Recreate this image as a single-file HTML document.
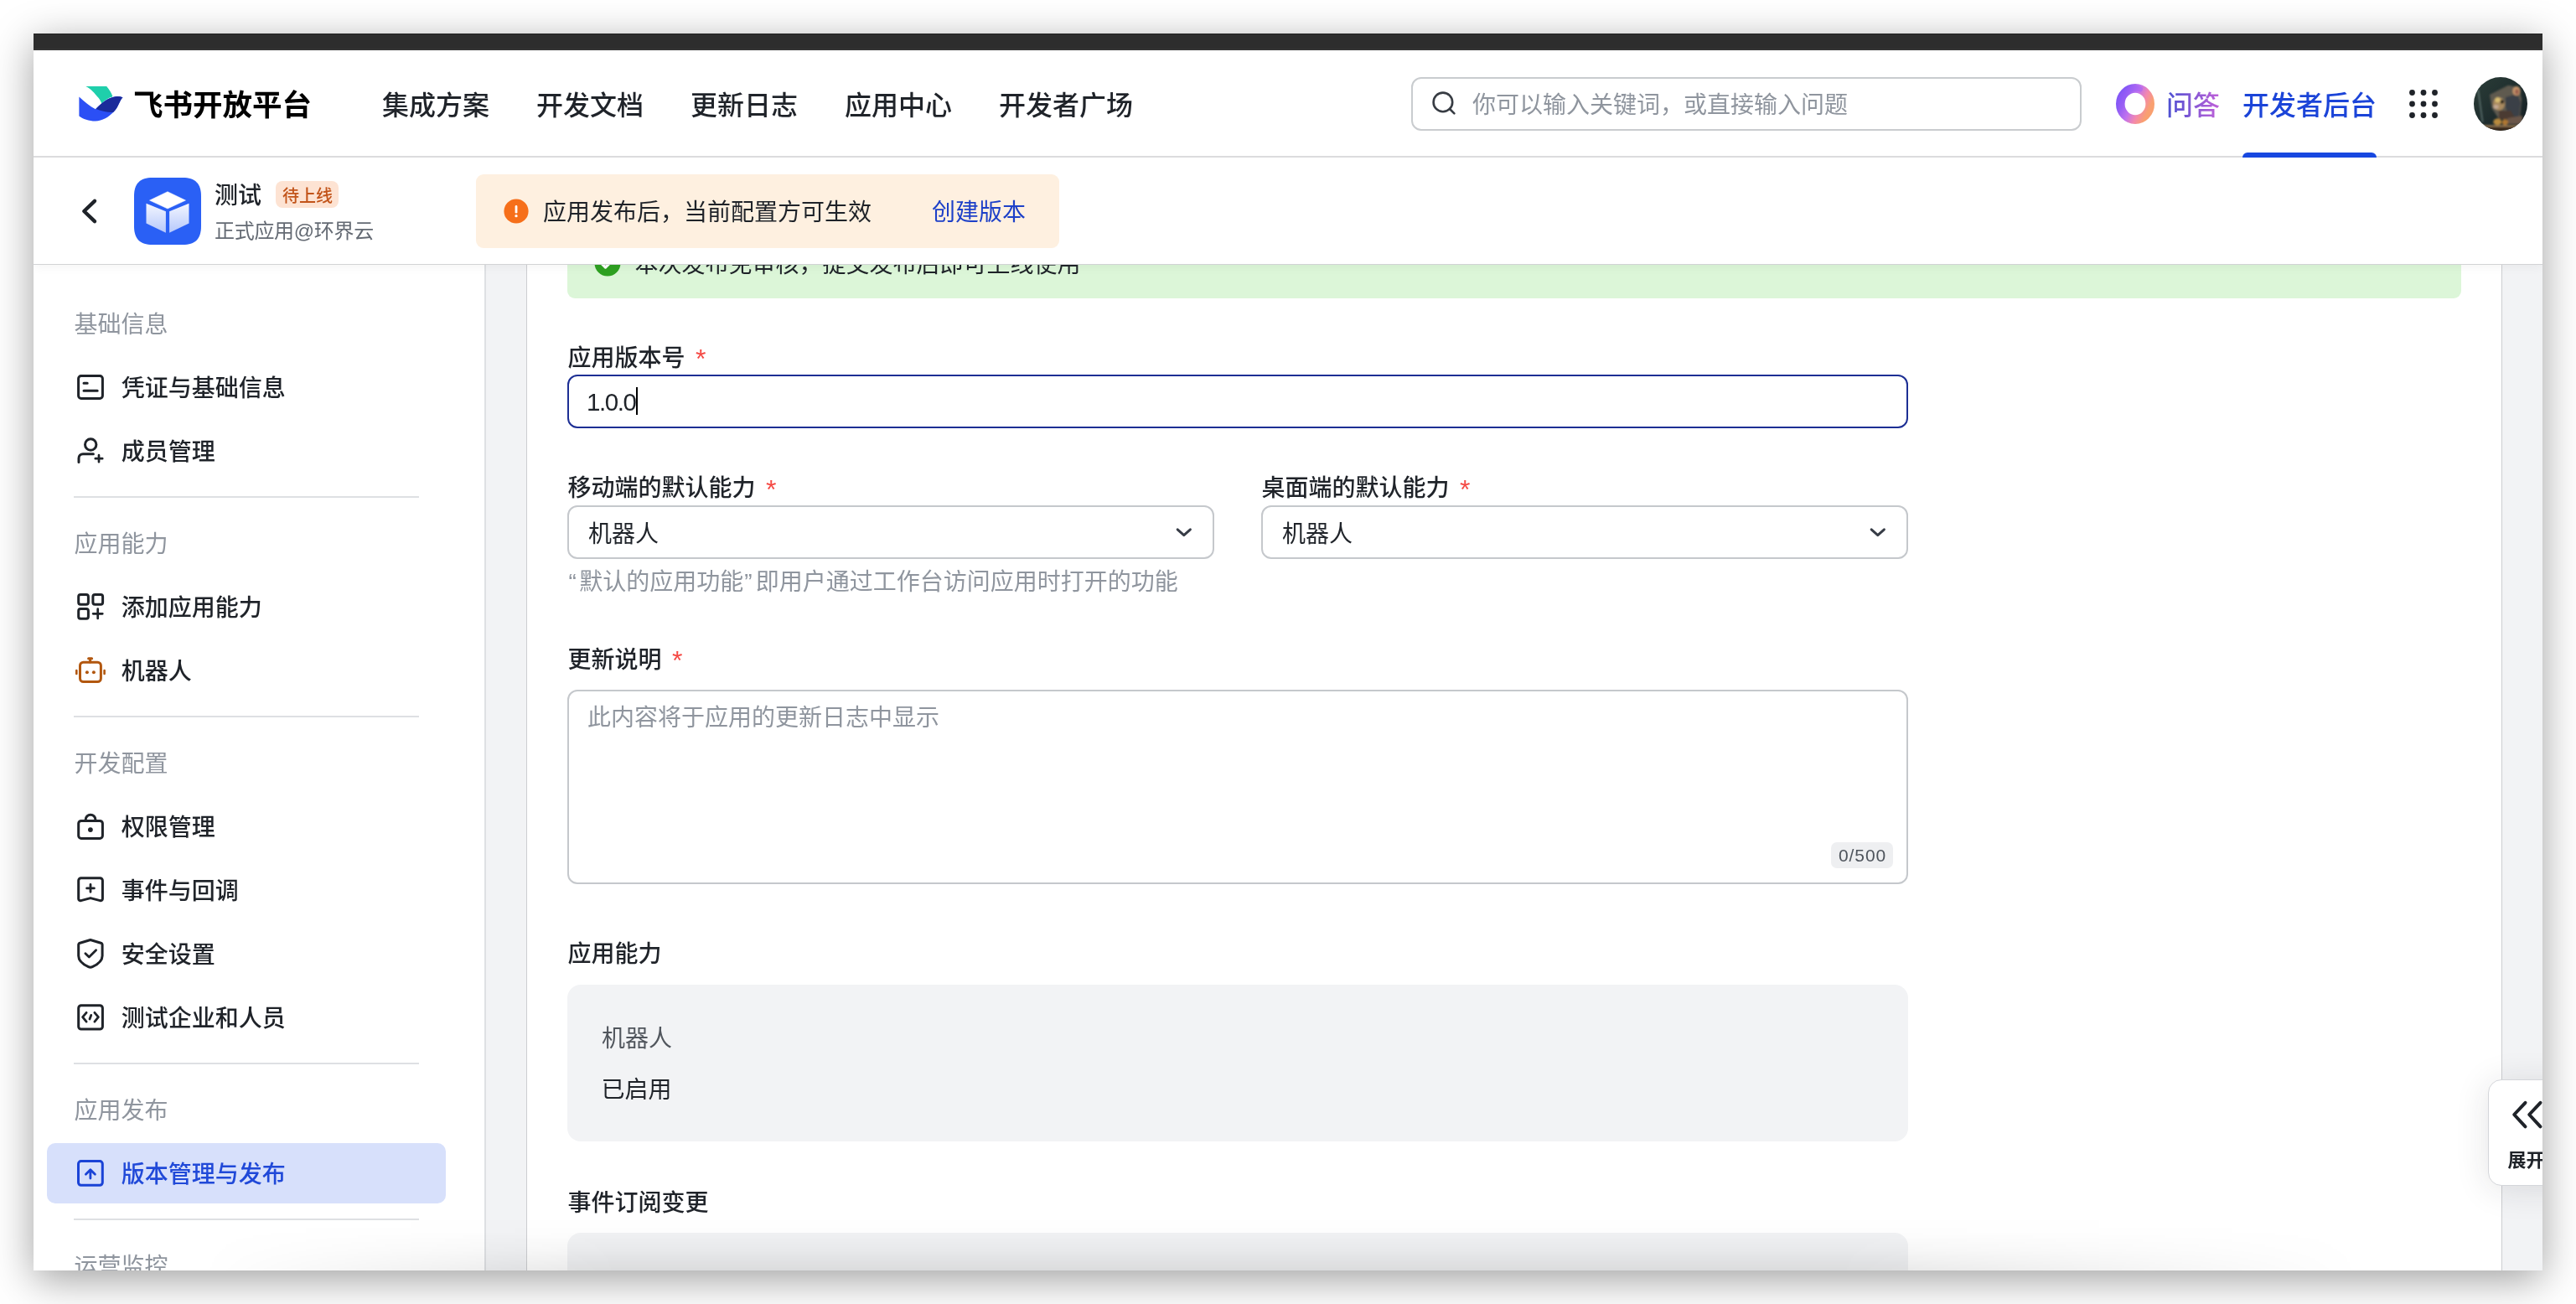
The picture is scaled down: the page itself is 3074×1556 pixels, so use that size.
<!DOCTYPE html>
<html lang="zh-CN">
<head>
<meta charset="utf-8">
<title>飞书开放平台</title>
<style>
*{box-sizing:border-box;margin:0;padding:0}
html,body{width:3074px;height:1556px;overflow:hidden;background:#fff}
body{font-family:"Liberation Sans","Noto Sans CJK SC",sans-serif;color:#1f2329;position:relative}
#shadow{position:absolute;left:40px;top:40px;width:2994px;height:1476px;box-shadow:0 11px 46px rgba(0,0,0,.376);background:#fff}
#win{position:absolute;left:40px;top:40px;width:2994px;height:1476px;overflow:hidden;background:#fff}
#abs{position:absolute;left:-40px;top:-40px;width:3074px;height:1556px;will-change:transform}
.a{position:absolute;white-space:nowrap}
.t{position:absolute;white-space:nowrap;height:40px;line-height:40px}
.m{font-weight:500}
.b{font-weight:700}
/* top */
#bar{left:40px;top:40px;width:2994px;height:20px;background:linear-gradient(to bottom,#222 0,#222 1px,#2d2d2d 1px,#2d2d2d 18px,#343434 18px)}
#hdr{left:40px;top:60px;width:2994px;height:128px;background:#fff;border-bottom:2px solid #dcdcde}
#sub{left:40px;top:188px;width:2994px;height:128px;background:#fff;border-bottom:1px solid #d2d3d5;box-shadow:0 2px 12px rgba(0,0,0,.05)}
.nav{font-size:32px;font-weight:500;top:105.500px;color:#1f2329}
#search{left:1684px;top:92px;width:800px;height:64px;border:2px solid #c9cccf;border-radius:12px;background:#fff}
/* body */
#bg{left:40px;top:316px;width:2994px;height:1200px;background:#f2f3f5}
#side{left:40px;top:316px;width:540px;height:1200px;background:#fff;border-right:2px solid #dee0e3}
#panel{left:628px;top:316px;width:2358px;height:1200px;background:#fff;border-left:1px solid #cdced1;border-right:1px solid #cdced1}
.sh{font-size:28px;color:#8f959e;left:88.500px}
.si{font-size:28px;font-weight:500;color:#1f2329;left:144.800px}
.sd{left:88px;width:412px;height:2px;background:#dee0e3}
.ico{position:absolute;left:90px;width:36px;height:36px;overflow:visible}
.lbl{font-size:28px;font-weight:500;color:#1f2329;left:677.400px}
.req{position:absolute;height:40px;line-height:40px;font-size:32px;color:#f54a45;font-family:"Liberation Sans",sans-serif}
.box{position:absolute;border:2px solid #c5c8cc;border-radius:12px;background:#fff}
.gray{position:absolute;background:#f2f3f5;border-radius:16px}
</style>
</head>
<body>
<div id="shadow"></div>
<div id="win"><div id="abs">
<!-- BODY BACKGROUND -->
<div class="a" id="bg"></div>
<div class="a" id="side"></div>
<div class="a" id="panel"></div>
<!--SIDEBAR-->
<div class="t sh" style="top:368px">基础信息</div>
<svg class="ico" style="top:444px" viewBox="0 0 36 36" fill="none" stroke="#1f2329" stroke-width="3" stroke-linecap="round" stroke-linejoin="round"><rect x="3.600" y="4.500" width="28.800" height="27" rx="3.200"/><path d="M10 13.200h4.200M10 22.200h16.200"/></svg>
<div class="t si" style="top:444px">凭证与基础信息</div>
<svg class="ico" style="top:520px" viewBox="0 0 36 36" fill="none" stroke="#1f2329" stroke-width="3" stroke-linecap="round" stroke-linejoin="round"><circle cx="18.200" cy="10.500" r="6.700"/><path d="M4 31.600V26.700a5 5 0 0 1 5-5H21.400"/><path d="M28 23.200v8M23.800 27.200h8.400" stroke-width="2.700"/></svg>
<div class="t si" style="top:520px">成员管理</div>
<div class="a sd" style="top:592px"></div>
<div class="t sh" style="top:630px">应用能力</div>
<svg class="ico" style="top:706px" viewBox="0 0 36 36" fill="none" stroke="#1f2329" stroke-width="3" stroke-linecap="round" stroke-linejoin="round"><rect x="3.700" y="3.500" width="11.700" height="11.700" rx="2.400"/><rect x="20.900" y="3.500" width="11.700" height="11.700" rx="2.400"/><rect x="3.700" y="20.500" width="11.700" height="11.700" rx="2.400"/><path d="M26.700 20.700v11.200M21.100 26.300h11.200" stroke-width="2.700"/></svg>
<div class="t si" style="top:706px">添加应用能力</div>
<svg class="ico" style="top:782px" viewBox="0 0 36 36" fill="none" stroke="#b2570f" stroke-width="3" stroke-linecap="round" stroke-linejoin="round"><rect x="5.500" y="8.200" width="24.900" height="23.400" rx="4"/><path d="M15.600 3.800h4M17.600 4v4"/><path d="M1.300 18v4M34.600 18v4" stroke-width="2.600"/><circle cx="13.900" cy="20.200" r="2" fill="#b2570f" stroke="none"/><circle cx="21.900" cy="20.200" r="2" fill="#b2570f" stroke="none"/></svg>
<div class="t si" style="top:782px">机器人</div>
<div class="a sd" style="top:854px"></div>
<div class="t sh" style="top:892px">开发配置</div>
<svg class="ico" style="top:966px" viewBox="0 0 36 36" fill="none" stroke="#1f2329" stroke-width="3" stroke-linecap="round" stroke-linejoin="round"><rect x="3.700" y="13.400" width="28.700" height="21" rx="3.200"/><path d="M12.200 13.400V12a5.850 5.850 0 0 1 11.700 0V13.400"/><circle cx="17.900" cy="24.100" r="2.900" fill="#1f2329" stroke="none"/></svg>
<div class="t si" style="top:968px">权限管理</div>
<svg class="ico" style="top:1042px" viewBox="0 0 36 36" fill="none" stroke="#1f2329" stroke-width="3" stroke-linecap="round" stroke-linejoin="round"><path d="M6.700 5.700H29.400a3 3 0 0 1 3 3V30.400a2.300 2.300 0 0 1-3 2.200L18 29.600 6.700 32.600a2.300 2.300 0 0 1-3-2.200V8.700a3 3 0 0 1 3-3Z"/><path d="M18 13.500v8.800M13.600 17.900h8.800" stroke-width="2.800"/></svg>
<div class="t si" style="top:1044px">事件与回调</div>
<svg class="ico" style="top:1118px" viewBox="0 0 36 36" fill="none" stroke="#1f2329" stroke-width="3" stroke-linecap="round" stroke-linejoin="round"><path d="M17.900 3.500L30.300 7.200Q32.100 7.800 32.100 9.600V22.500C32.100 29.500 25.500 33.300 20.300 35.700Q17.900 36.800 15.500 35.700C10.300 33.300 3.700 29.500 3.700 22.500V9.600Q3.700 7.800 5.500 7.200Z"/><path d="M11.900 19.700l4.400 4.400 8.300-8.300" stroke-width="2.800"/></svg>
<div class="t si" style="top:1120px">安全设置</div>
<svg class="ico" style="top:1194px" viewBox="0 0 36 36" fill="none" stroke="#1f2329" stroke-width="3" stroke-linecap="round" stroke-linejoin="round"><rect x="3.700" y="5.700" width="28.700" height="28.400" rx="3.200"/><path d="M13.100 14.300L8.600 19.700l4.500 5.400M22.900 14.300l4.500 5.400-4.500 5.400M18.700 17.400l-1.700 4.600" stroke-width="2.800"/></svg>
<div class="t si" style="top:1196px">测试企业和人员</div>
<div class="a sd" style="top:1268px"></div>
<div class="t sh" style="top:1306px">应用发布</div>
<div class="a" style="left:56px;top:1364px;width:476px;height:72px;border-radius:10px;background:#d7e0fb"></div>
<svg class="ico" style="top:1382px" viewBox="0 0 36 36" fill="none" stroke="#1a43d6" stroke-width="3" stroke-linecap="round" stroke-linejoin="round"><rect x="3.500" y="3.500" width="28.800" height="28.800" rx="3.200"/><path d="M17.900 24V13.800M12.400 19.200L17.900 13.700l5.500 5.500" stroke-width="2.800"/></svg>
<div class="t si" style="color:#2049d8;top:1382px">版本管理与发布</div>
<div class="a sd" style="top:1454px"></div>
<div class="t sh" style="top:1492px">运营监控</div>
<!--MAIN-->
<div class="a" style="left:677px;top:270px;width:2260px;height:85.500px;border-radius:0 0 9px 9px;background:#dcf6d8"></div>
<svg class="a" style="left:708.200px;top:297.300px" width="34" height="34" viewBox="0 0 34 34"><circle cx="17" cy="17" r="15.500" fill="#2ea121"/><path d="M9.500 17l5 5 10-10" fill="none" stroke="#fff" stroke-width="3.200" stroke-linecap="round" stroke-linejoin="round"/></svg>
<div class="t" style="left:757.500px;top:296px;font-size:28px;color:#1f2329">本次发布免审核，提交发布后即可上线使用</div>
<div class="t lbl" style="top:408px">应用版本号</div>
<div class="req" style="left:830px;top:407.500px">*</div>
<div class="box" style="left:677px;top:447px;width:1600px;height:64px;border:2px solid #1d2f94;border-radius:12px"></div>
<div class="t" style="left:700px;top:459.500px;font-size:29.500px;color:#1f2329;letter-spacing:-1.400px">1.0.0</div>
<div class="a" style="left:759px;top:462px;width:2px;height:33px;background:#000"></div>
<div class="t lbl" style="top:563px">移动端的默认能力</div>
<div class="req" style="left:914px;top:563.500px">*</div>
<div class="box" style="left:677px;top:603px;width:772px;height:64px"></div>
<div class="t" style="left:702px;top:617.500px;font-size:28px;color:#1f2329">机器人</div>
<svg class="a" style="left:1398px;top:621px" width="30" height="30" viewBox="0 0 30 30" fill="none" stroke="#373c46" stroke-width="3" stroke-linecap="round" stroke-linejoin="round"><path d="M7.200 10.800L14.800 17.600 22.400 10.800"/></svg>
<div class="t lbl" style="left:1505.400px;top:563px">桌面端的默认能力</div>
<div class="req" style="left:1742px;top:563.500px">*</div>
<div class="box" style="left:1505px;top:603px;width:772px;height:64px"></div>
<div class="t" style="left:1530px;top:617.500px;font-size:28px;color:#1f2329">机器人</div>
<svg class="a" style="left:2226px;top:621px" width="30" height="30" viewBox="0 0 30 30" fill="none" stroke="#373c46" stroke-width="3" stroke-linecap="round" stroke-linejoin="round"><path d="M7.200 10.800L14.800 17.600 22.400 10.800"/></svg>
<div class="t" style="left:677px;top:675px;font-size:28px;color:#8f959e"><span style="margin-left:1.500px;margin-right:3.500px">“</span>默认的应用功能<span style="margin-left:1px;margin-right:4px">”</span>即用户通过工作台访问应用时打开的功能</div>
<div class="t lbl" style="top:767.500px">更新说明</div>
<div class="req" style="left:802px;top:767.500px">*</div>
<div class="box" style="left:677px;top:823px;width:1600px;height:232px"></div>
<div class="t" style="left:701px;top:837px;font-size:28px;color:#8f959e">此内容将于应用的更新日志中显示</div>
<div class="a" style="left:2185px;top:1005px;width:74px;height:31px;border-radius:7px;background:#eeeff1"></div>
<div class="t" style="left:2194px;top:1001px;font-size:21px;color:#4e545c;letter-spacing:.9px">0/500</div>
<div class="t lbl" style="top:1119px">应用能力</div>
<div class="gray" style="left:677px;top:1175px;width:1600px;height:187px"></div>
<div class="t" style="left:718px;top:1219.500px;font-size:28px;color:#51565d">机器人</div>
<div class="t" style="left:717.500px;top:1281px;font-size:28px;color:#1f2329">已启用</div>
<div class="t lbl" style="top:1415.500px">事件订阅变更</div>
<div class="gray" style="left:677px;top:1471px;width:1600px;height:120px"></div>
<div class="a" style="left:2969px;top:1288px;width:120px;height:127px;border-radius:16px;background:#fff;border:1.500px solid #d4d6da;box-shadow:0 4px 40px rgba(31,35,41,.12)"></div>
<svg class="a" style="left:2994px;top:1308px" width="50" height="44" viewBox="0 0 50 44" fill="none" stroke="#1f2329" stroke-width="4" stroke-linecap="round" stroke-linejoin="round"><path d="M19.500 7.800L6.200 22l13.300 14.300M37.500 7.800L24.200 22l13.300 14.300"/></svg>
<div class="t b" style="left:2992.500px;top:1365px;font-size:22px;color:#1f2329">展开</div>
<!--SUBHEADER-->
<div class="a" id="sub"></div>
<svg class="a" style="left:92px;top:232px" width="30" height="40" viewBox="0 0 30 40" fill="none" stroke="#1f2329" stroke-width="4.400" stroke-linecap="round" stroke-linejoin="round"><path d="M21 7.800L8.300 20L21 32.200"/></svg>
<svg class="a" style="left:160px;top:212px" width="80" height="80" viewBox="0 0 80 80">
<defs><linearGradient id="cb1" x1="0" y1="0" x2="0" y2="1"><stop offset="0" stop-color="#f3f6ff"/><stop offset="1" stop-color="#b6c8fb"/></linearGradient></defs>
<path d="M22 0H58C73 0 80 7 80 22V58C80 73 73 80 58 80H22C7 80 0 73 0 58V22C0 7 7 0 22 0Z" fill="#2a60f5"/>
<path d="M40 16.700L61.500 27.100L40 37L18.500 27.100Z" fill="#fff" stroke="#fff" stroke-width=".500" stroke-linejoin="round"/>
<path d="M14.500 30.700L37.900 40.200V65.800L14.500 54.600Z" fill="url(#cb1)"/>
<path d="M65.500 30.700L42.100 40.200V65.800L65.500 54.600Z" fill="url(#cb1)"/>
</svg>
<div class="t m" style="left:256px;top:214px;font-size:28px;color:#1f2329">测试</div>
<div class="a" style="left:329px;top:216px;width:75px;height:32px;border-radius:8px;background:#fde3d3"></div>
<div class="t" style="left:337px;top:213.500px;font-size:20px;color:#c2541a;font-weight:500">待上线</div>
<div class="t" style="left:256px;top:256px;font-size:24px;letter-spacing:-.3px;color:#646a73">正式应用@环界云</div>
<div class="a" style="left:568px;top:208px;width:696px;height:88px;border-radius:9px;background:#fef0e0"></div>
<svg class="a" style="left:600px;top:235.500px" width="32" height="32" viewBox="0 0 32 32"><circle cx="16" cy="16" r="14.600" fill="#f66f1a"/><rect x="14.600" y="9" width="2.800" height="9.600" rx="1.400" fill="#fff"/><circle cx="16" cy="21.700" r="1.650" fill="#fff"/></svg>
<div class="t" style="left:648px;top:234px;font-size:28px;color:#1f2329">应用发布后，当前配置方可生效</div>
<div class="t" style="left:1112px;top:234px;font-size:28px;color:#1d40c8">创建版本</div>
<!--HEADER-->
<div class="a" id="hdr"></div>
<svg class="a" style="left:92px;top:101px" width="58" height="46" viewBox="0 0 58 46">
<path d="M10.300 2.100H35.200C38.500 6 41 10 42.500 14.300C37 16 32 19.500 29.600 22.900C28 19 26.500 16.500 24.100 14.300C21 10.500 17 5.500 10.300 2.100Z" fill="#1fcfab"/>
<path d="M2.400 14.500C8 20 15 25.500 21.900 29.300C27 24 35 16.500 43.400 14.700C47 13.700 51 13.900 54.500 15.200C50.500 19 49.500 27 43.400 32.800C38 38.500 30 43.500 21.900 43.500C14 43.500 7 41 2.400 37.500Z" fill="#2b4ff5"/>
<path d="M22.500 29C27 24 35 16.500 43.400 14.700C47 13.700 51 13.900 54.500 15.200C50.500 19 49.500 27 43.400 32.800C38 33.500 31 32 22.500 29Z" fill="#1a2b9a"/>
</svg>
<div class="t b" style="left:159px;top:106px;font-size:35.500px;color:#000;letter-spacing:0px">飞书开放平台</div>
<div class="t nav" style="left:456px">集成方案</div>
<div class="t nav" style="left:640px">开发文档</div>
<div class="t nav" style="left:824px">更新日志</div>
<div class="t nav" style="left:1008px">应用中心</div>
<div class="t nav" style="left:1192px">开发者广场</div>
<div class="a" id="search"></div>
<svg class="a" style="left:1706px;top:107px" width="36" height="36" viewBox="0 0 36 36" fill="none" stroke="#373c43" stroke-width="2.600" stroke-linecap="round"><circle cx="15.900" cy="14.900" r="11.300"/><path d="M24 23L29.400 28.400"/></svg>
<div class="t" style="left:1757px;top:105.500px;font-size:28px;color:#8f959e">你可以输入关键词，或直接输入问题</div>
<svg class="a" style="left:2523px;top:99px" width="50" height="50" viewBox="0 0 50 50">
<defs><linearGradient id="qa1" x1="0.050" y1="0.250" x2="0.950" y2="0.700"><stop offset="0" stop-color="#8458f6"/><stop offset=".42" stop-color="#bf72ef"/><stop offset=".72" stop-color="#f388ad"/><stop offset="1" stop-color="#f9a070"/></linearGradient></defs>
<ellipse cx="25" cy="25" rx="17.700" ry="18.600" fill="none" stroke="url(#qa1)" stroke-width="10.600"/>
<path d="M7.500 28A17.700 18.600 0 0 1 31 7.500" fill="none" stroke="#9a5cf8" stroke-width="6" stroke-linecap="round" opacity=".4"/>
</svg>
<div class="t" style="left:2585px;top:105.500px;font-size:32px;font-weight:500;background:linear-gradient(90deg,#4a50d2,#c060d8);-webkit-background-clip:text;background-clip:text;color:transparent">问答</div>
<div class="t m" style="left:2676px;top:105.500px;font-size:32px;color:#1b44d8">开发者后台</div>
<div class="a" style="left:2676px;top:182px;width:160px;height:6px;background:#1848e0;border-radius:6px 6px 0 0"></div>
<svg class="a" style="left:2872px;top:104px" width="40" height="40" viewBox="0 0 40 40" fill="#1f2329"><circle cx="6.5" cy="6.5" r="3.4"/><circle cx="20" cy="6.5" r="3.4"/><circle cx="33.5" cy="6.5" r="3.4"/><circle cx="6.5" cy="20" r="3.4"/><circle cx="20" cy="20" r="3.4"/><circle cx="33.5" cy="20" r="3.4"/><circle cx="6.5" cy="33.5" r="3.4"/><circle cx="20" cy="33.5" r="3.4"/><circle cx="33.5" cy="33.5" r="3.4"/></svg>
<svg class="a" style="left:2952px;top:92px" width="64" height="64" viewBox="0 0 64 64">
<defs><clipPath id="avc"><circle cx="32" cy="32" r="32"/></clipPath><filter id="avb" x="-10%" y="-10%" width="120%" height="120%"><feGaussianBlur stdDeviation="1.300"/></filter>
<linearGradient id="avg" x1="0" y1="0" x2="1" y2="1"><stop offset="0" stop-color="#2b3d38"/><stop offset=".6" stop-color="#1d2b2c"/><stop offset="1" stop-color="#141c22"/></linearGradient></defs>
<g clip-path="url(#avc)"><rect width="64" height="64" fill="url(#avg)"/>
<g filter="url(#avb)">
<path d="M5.200 14.800L10.500 53.500" stroke="#9fb8b4" stroke-width="0.900" opacity=".85"/>
<path d="M19 21L41.200 9.800L54.200 12.300L57.200 26.500L55 50L30 50L21.500 37Z" fill="#5e5a50"/>
<path d="M38 24L52 20L56 30L54 48L42 48L38 36Z" fill="#3b4046"/>
<ellipse cx="51" cy="16.600" rx="4.600" ry="5.500" fill="#c7966a"/><ellipse cx="51.500" cy="17.500" rx="2.400" ry="3.200" fill="#9c6250"/>
<ellipse cx="30" cy="32" rx="7" ry="7.800" fill="#a98a5e"/>
<ellipse cx="28.500" cy="27.200" rx="3.200" ry="3" fill="#d8bd72"/>
<ellipse cx="26.500" cy="35.500" rx="3.200" ry="2.400" fill="#c2a892"/>
<ellipse cx="33.800" cy="29.500" rx="2.100" ry="2.300" fill="#15130f"/>
<path d="M30 40L44 40L50 50L30 50Z" fill="#4c3b31"/>
<path d="M40 49L58 46L58 56L40 56Z" fill="#6a5648"/>
<ellipse cx="28.300" cy="53.500" rx="5" ry="3.900" fill="#b98a3e"/><ellipse cx="37.300" cy="53.800" rx="3.600" ry="3.600" fill="#ad7633"/>
<rect x="0" y="57.400" width="64" height="2.200" fill="#a58258"/><rect x="0" y="59.400" width="64" height="5" fill="#3a2a1e"/>
</g></g></svg>
<div class="a" id="bar"></div>
<!--OVERLAY-->
<div class="a" style="left:40px;top:1452px;width:2994px;height:64px;background:linear-gradient(to bottom,rgba(0,0,0,0) 0,rgba(0,0,0,.007) 28%,rgba(0,0,0,.04) 62%,rgba(0,0,0,.096) 100%);-webkit-mask-image:linear-gradient(to right,transparent 200px,#000 700px,#000 2150px,transparent 2780px);mask-image:linear-gradient(to right,transparent 200px,#000 700px,#000 2150px,transparent 2780px)"></div>
</div></div>
</body>
</html>
